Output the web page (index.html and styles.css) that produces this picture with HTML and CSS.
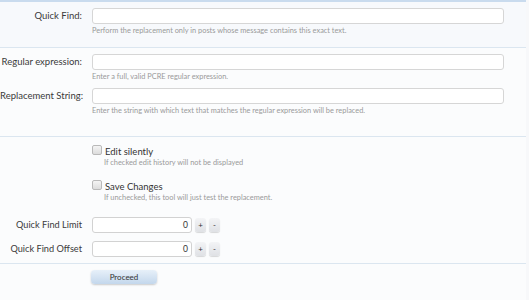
FILE: index.html
```html
<!DOCTYPE html>
<html>
<head>
<meta charset="utf-8">
<link rel="stylesheet" href="styles.css">
</head>
<body>
<form class="form">
  <div class="section top">
    <div class="row">
      <label class="label">Quick Find:</label>
      <div class="field">
        <div class="input"></div>
        <p class="desc">Perform the replacement only in posts whose message contains this exact text.</p>
      </div>
    </div>
  </div>
  <div class="section">
    <div class="row">
      <label class="label">Regular expression:</label>
      <div class="field">
        <div class="input"></div>
        <p class="desc">Enter a full, valid PCRE regular expression.</p>
      </div>
    </div>
    <div class="row row-next">
      <label class="label">Replacement String:</label>
      <div class="field">
        <div class="input"></div>
        <p class="desc">Enter the string with which text that matches the regular expression will be replaced.</p>
      </div>
    </div>
  </div>
  <div class="section opts">
    <div class="row">
      <span></span>
      <div class="field">
        <div class="check"><span class="box"></span><span class="check-label">Edit silently</span></div>
        <p class="desc cdesc">If checked edit history will not be displayed</p>
      </div>
    </div>
    <div class="row row-check2">
      <span></span>
      <div class="field">
        <div class="check"><span class="box"></span><span class="check-label">Save Changes</span></div>
        <p class="desc cdesc">If unchecked, this tool will just test the replacement.</p>
      </div>
    </div>
    <div class="row row-num">
      <label class="label num-label">Quick Find Limit</label>
      <div class="num">
        <div class="num-input">0</div>
        <span class="spin">+</span>
        <span class="spin">-</span>
      </div>
    </div>
    <div class="row row-num2">
      <label class="label num-label">Quick Find Offset</label>
      <div class="num">
        <div class="num-input">0</div>
        <span class="spin">+</span>
        <span class="spin">-</span>
      </div>
    </div>
  </div>
  <div class="submit">
    <span class="button">Proceed</span>
  </div>
</form>
</body>
</html>
```
FILE: styles.css
```css
html, body {
  margin: 0;
  padding: 0;
  background: #f7f8fa;
}
body {
  font-family: "Lato", "Open Sans", sans-serif;
  color: #333;
}
.form {
  width: 526px;
  height: 300px;
  border-top: 2px solid #c9dbee;
  background: #fbfcfd;
  box-sizing: border-box;
}
.section {
  border-bottom: 1px solid #dbe6f0;
}
.section.top {
  background: #f7f9fc;
  padding: 6px 0 11px;
}
.section:nth-child(2) {
  padding: 6px 0 20px;
}
.row {
  display: grid;
  grid-template-columns: 82px 412px;
  column-gap: 10px;
}
.row-next { margin-top: 6px; }
.label {
  font-size: 9.5px;
  line-height: 16px;
  text-align: right;
  color: #3a3a3a;
  white-space: nowrap;
}
.num-label { font-size: 9.2px; }
.field {
  display: flex;
  flex-direction: column;
}
.input {
  height: 16px;
  box-sizing: border-box;
  border: 1px solid #d6d6d6;
  border-radius: 3px;
  background: #fff;
}
.desc {
  margin: 2px 0 0;
  font-size: 7.4px;
  line-height: 10px;
  color: #9a9a9a;
  white-space: nowrap;
}
.opts { padding: 8px 0 6px; }
.check {
  display: flex;
  align-items: center;
  height: 12px;
  gap: 3px;
}
.box {
  width: 8px;
  height: 8px;
  border: 1px solid #b9b9b9;
  border-radius: 2px;
  background: linear-gradient(#f4f4f4, #dcdcdc);
  margin-top: -2px;
}
.check-label {
  font-size: 9.5px;
  color: #333;
}
.cdesc { margin: 1px 0 0 12px; }
.row-check2 { margin-top: 12px; }
.row-num { margin-top: 14px; }
.row-num2 { margin-top: 8px; }
.num {
  display: flex;
  align-items: center;
  gap: 3px;
}
.num-input {
  width: 100px;
  height: 16px;
  box-sizing: border-box;
  border: 1px solid #d2d2d2;
  border-radius: 3px;
  background: #fff;
  font-size: 8.5px;
  line-height: 14px;
  text-align: right;
  padding-right: 3px;
  color: #333;
}
.spin {
  width: 11px;
  height: 14px;
  border-radius: 3px;
  background: linear-gradient(#f3f4f6, #dfe1e5);
  box-shadow: 0 1px 1px rgba(0,0,0,0.15);
  font-size: 8px;
  line-height: 14px;
  text-align: center;
  color: #333;
}
.submit {
  display: flex;
  padding: 6px 0 0 91px;
}
.button {
  width: 66px;
  height: 14px;
  border-radius: 4px;
  background: linear-gradient(#e7f0f9, #c3d7ec);
  box-shadow: 0 1px 2px rgba(0,0,0,0.2);
  font-size: 8px;
  line-height: 14px;
  text-align: center;
  color: #333;
}
```
